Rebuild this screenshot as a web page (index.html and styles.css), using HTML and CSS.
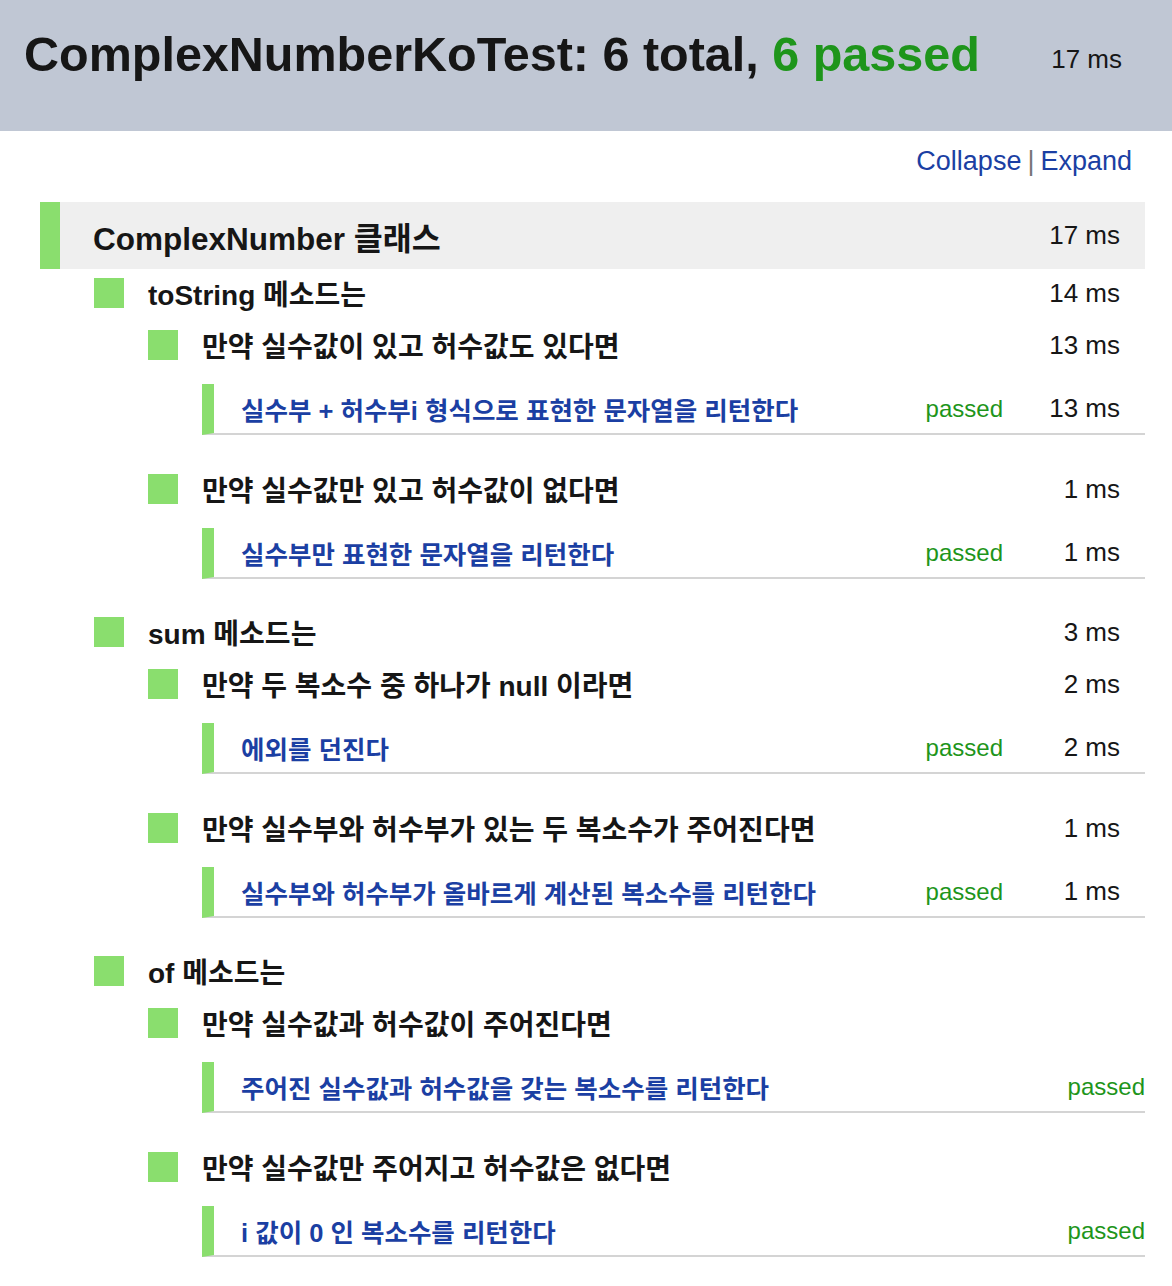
FILE: index.html
```html
<!DOCTYPE html>
<html lang="ko">
<head>
<meta charset="utf-8">
<title>ComplexNumberKoTest</title>
<link rel="stylesheet" href="styles.css">
</head>
<body>
<header class="header">
  <h1 class="title">ComplexNumberKoTest: 6 total, <span class="ok">6 passed</span></h1>
  <div class="total-time">17 ms</div>
</header>
<nav class="toolbar"><a class="tool-link" href="#">Collapse</a><span class="sep">|</span><a class="tool-link" href="#">Expand</a></nav>

<main class="tree">
  <section class="suite">
    <div class="suite-line"><span class="suite-name">ComplexNumber 클래스</span><span class="time">17 ms</span></div>

    <div class="group lvl1">
      <div class="group-line"><span class="box"></span><span class="gname">toString 메소드는</span><span class="time">14 ms</span></div>
      <div class="group lvl2">
        <div class="group-line"><span class="box"></span><span class="gname">만약 실수값이 있고 허수값도 있다면</span><span class="time">13 ms</span></div>
        <div class="test"><span class="tname">실수부 + 허수부i 형식으로 표현한 문자열을 리턴한다</span><span class="status">passed</span><span class="time">13 ms</span></div>
      </div>
      <div class="group lvl2">
        <div class="group-line"><span class="box"></span><span class="gname">만약 실수값만 있고 허수값이 없다면</span><span class="time">1 ms</span></div>
        <div class="test"><span class="tname">실수부만 표현한 문자열을 리턴한다</span><span class="status">passed</span><span class="time">1 ms</span></div>
      </div>
    </div>

    <div class="group lvl1">
      <div class="group-line"><span class="box"></span><span class="gname">sum 메소드는</span><span class="time">3 ms</span></div>
      <div class="group lvl2">
        <div class="group-line"><span class="box"></span><span class="gname">만약 두 복소수 중 하나가 null 이라면</span><span class="time">2 ms</span></div>
        <div class="test"><span class="tname">에외를 던진다</span><span class="status">passed</span><span class="time">2 ms</span></div>
      </div>
      <div class="group lvl2">
        <div class="group-line"><span class="box"></span><span class="gname">만약 실수부와 허수부가 있는 두 복소수가 주어진다면</span><span class="time">1 ms</span></div>
        <div class="test"><span class="tname">실수부와 허수부가 올바르게 계산된 복소수를 리턴한다</span><span class="status">passed</span><span class="time">1 ms</span></div>
      </div>
    </div>

    <div class="group lvl1">
      <div class="group-line"><span class="box"></span><span class="gname">of 메소드는</span></div>
      <div class="group lvl2">
        <div class="group-line"><span class="box"></span><span class="gname">만약 실수값과 허수값이 주어진다면</span></div>
        <div class="test no-time"><span class="tname">주어진 실수값과 허수값을 갖는 복소수를 리턴한다</span><span class="status">passed</span></div>
      </div>
      <div class="group lvl2">
        <div class="group-line"><span class="box"></span><span class="gname">만약 실수값만 주어지고 허수값은 없다면</span></div>
        <div class="test no-time"><span class="tname">i 값이 0 인 복소수를 리턴한다</span><span class="status">passed</span></div>
      </div>
    </div>
  </section>
</main>
</body>
</html>
```

FILE: styles.css
```css
html, body {
  margin: 0;
  padding: 0;
  background: #ffffff;
}
body {
  font-family: "Liberation Sans", Arial, "Noto Sans CJK KR", sans-serif;
  color: #111111;
}
.header {
  background: #c0c7d4;
  height: 131px;
  display: flex;
  align-items: flex-start;
  padding: 30px 50px 0 24px;
  box-sizing: border-box;
}
.title {
  margin: 0;
  font-size: 48.5px;
  line-height: 49px;
  font-weight: bold;
  color: #161616;
  flex: 1;
  white-space: nowrap;
}
.ok {
  color: #1e951b;
}
.total-time {
  font-size: 26px;
  line-height: 26px;
  margin-top: 16px;
  color: #161616;
}
.toolbar {
  display: flex;
  justify-content: flex-end;
  align-items: center;
  padding: 14px 40px 0 0;
  height: 32px;
  font-size: 27px;
}
.tool-link {
  color: #1b3fa3;
  text-decoration: none;
}
.sep {
  color: #777777;
  margin: 0 6px;
}
.tree {
  padding: 25px 27px 20px 40px;
}
.suite, .group {
  display: flow-root;
}
.suite-line {
  display: flex;
  align-items: center;
  height: 67px;
  background: #efefef;
  border-left: 20px solid #8ade6e;
  padding: 0 25px 0 33px;
}
.suite-name {
  flex: 1;
  font-size: 31.5px;
  font-weight: bold;
  color: #161616;
}
.time {
  font-size: 26px;
  color: #161616;
  text-align: right;
  min-width: 100px;
}
.group.lvl1 {
  padding-left: 54px;
}
.group.lvl1 + .group.lvl1 {
  margin-top: 3px;
}
.group.lvl2 {
  padding-left: 54px;
  margin-top: 4px;
}
.group-line {
  display: flex;
  align-items: center;
  height: 48px;
  padding-right: 25px;
}
.box {
  width: 30px;
  height: 30px;
  background: #8ade6e;
  margin-right: 24px;
  flex: none;
}
.gname {
  flex: 1;
  font-size: 28px;
  font-weight: bold;
  color: #161616;
}
.test {
  display: flex;
  align-items: center;
  height: 49px;
  margin: 15px 0 26px 54px;
  border-left: 12px solid #8ade6e;
  border-bottom: 2px solid #d4d4d4;
  padding: 0 25px 0 27px;
}
.test.no-time {
  padding-right: 0;
}
.tname {
  flex: 1;
  font-size: 25.5px;
  font-weight: bold;
  color: #1b3fa3;
}
.status {
  font-size: 24px;
  color: #1e951b;
}
.test .time {
  min-width: 117px;
}
```
